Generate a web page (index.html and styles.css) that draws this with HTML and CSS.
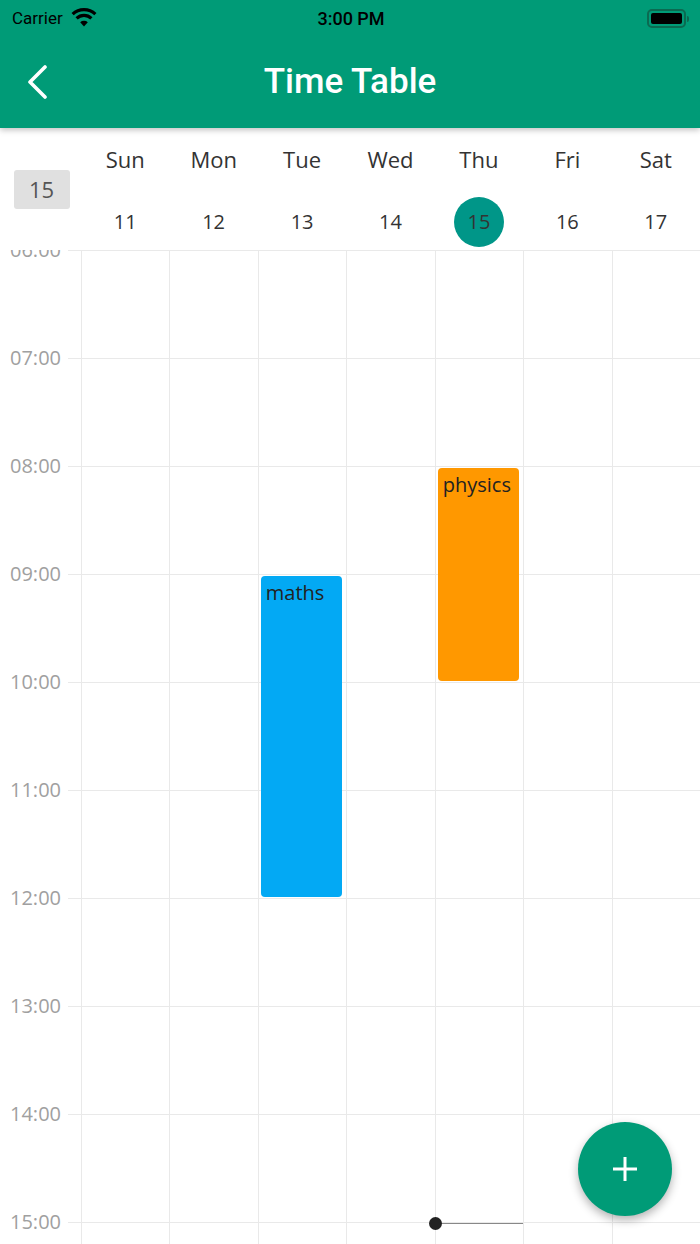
FILE: index.html
```html
<!DOCTYPE html>
<html>
<head lang="en">
    <meta charset="UTF-8">
    <title>Time Table</title>
    <link rel="stylesheet" href="styles.css">
</head>
<body>
<div class="top">
    <div class="status">
        <span class="carrier">Carrier
            <svg class="wifi" width="26" height="19" viewBox="0 0 26 19">
                <path d="M13 18.5 L9.2 14.3 A5.6 5.6 0 0 1 16.8 14.3 Z" fill="#000"/>
                <path d="M5.6 10.4 A10.8 10.8 0 0 1 20.4 10.4" fill="none" stroke="#000" stroke-width="3.2"/>
                <path d="M1.6 6.2 A16.6 16.6 0 0 1 24.4 6.2" fill="none" stroke="#000" stroke-width="3.2"/>
            </svg>
        </span>
        <span class="clock">3:00 PM</span>
        <span class="battery"><i></i></span>
    </div>
    <div class="navbar">
        <svg class="back" width="24" height="34" viewBox="0 0 24 34">
            <path d="M20 2 L5 17 L20 32" fill="none" stroke="#fff" stroke-width="3.6" stroke-linecap="round" stroke-linejoin="round"/>
        </svg>
        <h1>Time Table</h1>
    </div>
</div>

<div class="week">
    <div class="today"><span>15</span></div>
    <div class="day-head"><b>Sun</b><span>11</span></div>
    <div class="day-head"><b>Mon</b><span>12</span></div>
    <div class="day-head"><b>Tue</b><span>13</span></div>
    <div class="day-head"><b>Wed</b><span>14</span></div>
    <div class="day-head cur"><b>Thu</b><span>15</span></div>
    <div class="day-head"><b>Fri</b><span>16</span></div>
    <div class="day-head"><b>Sat</b><span>17</span></div>
</div>

<div class="grid">
    <div class="hours">
        <div class="hour"><span>06:00</span><i></i></div>
        <div class="hour"><span>07:00</span><i></i></div>
        <div class="hour"><span>08:00</span><i></i></div>
        <div class="hour"><span>09:00</span><i></i></div>
        <div class="hour"><span>10:00</span><i></i></div>
        <div class="hour"><span>11:00</span><i></i></div>
        <div class="hour"><span>12:00</span><i></i></div>
        <div class="hour"><span>13:00</span><i></i></div>
        <div class="hour"><span>14:00</span><i></i></div>
        <div class="hour"><span>15:00</span><i></i></div>
    </div>
    <div class="days">
        <div class="day"></div>
        <div class="day"></div>
        <div class="day">
            <div class="event blue" style="top:326px;height:321px">maths</div>
        </div>
        <div class="day"></div>
        <div class="day">
            <div class="event orange" style="top:218px;height:213px">physics</div>
            <div class="now" style="top:973px"></div>
        </div>
        <div class="day"></div>
        <div class="day"></div>
    </div>
    <div class="fab">
        <svg width="26" height="26" viewBox="0 0 26 26">
            <path d="M13 1 V25 M1 13 H25" stroke="#fff" stroke-width="3"/>
        </svg>
    </div>
</div>
</body>
</html>
```

FILE: styles.css
```css
*{padding:0;margin:0;box-sizing:border-box;}
body{width:700px;height:1244px;overflow:hidden;background:#fff;font-family:"Open Sans","Noto Sans",sans-serif;}

.top{background:#009b77;height:128px;position:relative;z-index:2;box-shadow:0 2px 6px rgba(0,0,0,.25);}
.status{height:36px;display:flex;align-items:center;justify-content:space-between;padding:0 10px 0 12px;font-family:Roboto,"Liberation Sans",sans-serif;color:#000;}
.carrier{font-size:17px;display:flex;align-items:center;gap:8px;width:120px;}
.wifi{margin-top:-2px;}
.clock{font-size:18px;font-weight:500;}
.battery{width:120px;display:flex;justify-content:flex-end;align-items:center;position:relative;}
.battery i{display:block;width:39px;height:19px;border:2px solid #0b6a51;border-radius:5px;padding:2px;margin-right:4px;}
.battery i:before{content:"";display:block;height:100%;background:#000;border-radius:2px;}
.battery:after{content:"";position:absolute;right:1px;top:7px;width:2px;height:6px;background:#0b6a51;border-radius:0 2px 2px 0;}
.navbar{height:92px;display:flex;align-items:center;justify-content:center;position:relative;}
.navbar .back{position:absolute;left:25px;top:29px;}
.navbar h1{color:#fff;font-family:Roboto,"Liberation Sans",sans-serif;font-weight:500;font-size:35px;margin-top:-2px;}

.week{height:122px;display:grid;grid-template-columns:81px repeat(7,1fr);color:#333;}
.today{display:flex;align-items:center;justify-content:center;padding-left:2px;}
.today span{display:block;width:56px;height:39px;line-height:39px;text-align:center;background:#e0e0e0;border-radius:3px;font-size:22px;color:#555;margin-top:0;}
.day-head{display:flex;flex-direction:column;align-items:center;}
.day-head b{font-weight:normal;font-size:22px;height:32px;line-height:32px;margin-top:15px;}
.day-head span{font-size:20px;width:50px;height:50px;line-height:50px;text-align:center;border-radius:50%;margin-top:22px;}
.day-head.cur span{background:#009688;}

.grid{position:relative;height:994px;overflow:hidden;}
.hour{height:108px;display:flex;}
.hour span{display:block;width:68px;padding-right:7px;text-align:right;font-size:20px;color:#a0a0a0;height:26px;line-height:26px;margin-top:-13px;}
.hour i{display:block;flex:1;border-top:1px solid #e9e9e9;}
.days{position:absolute;top:0;left:81px;right:0;bottom:0;display:grid;grid-template-columns:repeat(7,1fr);}
.day{position:relative;border-left:1px solid #e9e9e9;}
.event{position:absolute;left:2px;right:4px;border-radius:4px;padding:4px 5px;font-size:20px;line-height:26px;color:#222;}
.blue{background:#03a9f4;}
.orange{background:#ff9800;}
.now{position:absolute;left:0;right:0;height:1px;background:#888;}
.now:before{content:"";position:absolute;left:-7px;top:-6px;width:13px;height:13px;border-radius:50%;background:#222;}
.fab{position:absolute;left:578px;top:872px;width:94px;height:94px;border-radius:50%;background:#009b77;display:flex;align-items:center;justify-content:center;box-shadow:0 4px 10px rgba(0,0,0,.3);}
```
